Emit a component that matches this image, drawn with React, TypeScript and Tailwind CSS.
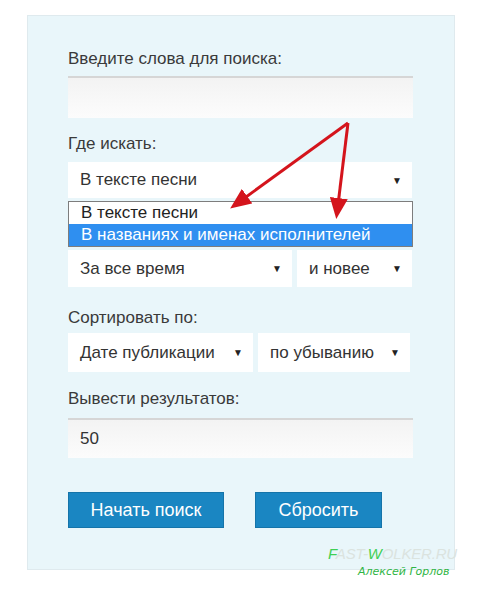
const sans = "font-['Liberation_Sans',Arial,sans-serif]"

function Select({ label, w, textX = 12 }: { label: string; w: string; textX?: number }) {
  return (
    <div className={`${w} h-full bg-white flex items-center justify-between pr-[10px]`}
      style={{ paddingLeft: textX }}>
      <span className="text-[17px] text-[#333]">{label}</span>
      <span className="text-[10px] text-[#222]">▼</span>
    </div>
  )
}

function Label({ children, mt }: { children: string; mt: string }) {
  return <div className={`${mt} h-5 leading-5 text-[17px] text-[#3a3a3a]`}>{children}</div>
}

export default function App() {
  return (
    <div className={`relative w-[480px] h-[600px] bg-white overflow-hidden pt-[15px] pl-[27px] ${sans}`}>
      <div className="w-[428px] h-[555px] bg-[#e9f6fa] border border-[#dfeaee] pt-[33px] pl-[40px]">
        <div className="w-[345px]">
          <Label mt="mt-0">Введите слова для поиска:</Label>
          <div className="mt-[7px] h-[42px] bg-gradient-to-b from-[#f3f3f3] to-[#fcfcfc] border-t-2 border-[#d6d6d6]" />

          <Label mt="mt-[16px]">Где искать:</Label>
          <div className="relative mt-[8px] h-[36px]">
            <Select label="В тексте песни" w="w-[344px]" />
            {/* открытый список */}
            <div className="absolute left-0 top-[39px] w-[345px] h-[46px] bg-white border border-[#7d7d7d] z-10">
              <div className="h-[22px] leading-[22px] pl-[12px] text-[17px] text-[#222]">В тексте песни</div>
              <div className="h-[22px] leading-[22px] pl-[12px] text-[17px] text-white bg-[#2f8ff0]">В названиях и именах исполнителей</div>
            </div>
          </div>

          <div className="mt-[52px] h-[37px] flex gap-[5px]">
            <Select label="За все время" w="w-[224px]" />
            <Select label="и новее" w="w-[115px]" />
          </div>

          <Label mt="mt-[21px]">Сортировать по:</Label>
          <div className="mt-[5px] h-[39px] flex gap-[5px]">
            <Select label="Дате публикации" w="w-[185px]" />
            <Select label="по убыванию" w="w-[152px]" />
          </div>

          <Label mt="mt-[17px]">Вывести результатов:</Label>
          <div className="mt-[9px] h-[40px] bg-gradient-to-b from-[#f3f3f3] to-[#fcfcfc] border-t-2 border-[#d6d6d6] flex items-center pl-[12px] text-[17px] text-[#333]">
            50
          </div>

          <div className="mt-[34px] flex gap-[31px]">
            <button className="w-[156px] h-[36px] bg-[#1a86c2] border border-[#1574a9] text-white text-[18px]">Начать поиск</button>
            <button className="w-[127px] h-[36px] bg-[#1a86c2] border border-[#1574a9] text-white text-[18px]">Сбросить</button>
          </div>
        </div>
      </div>

      {/* красные стрелки */}
      <svg className="absolute left-0 top-0 pointer-events-none z-20" width="480" height="600">
        <defs>
          <marker id="ah" markerWidth="7" markerHeight="6" refX="5" refY="3" orient="auto" markerUnits="strokeWidth">
            <path d="M0,0 L7,3 L0,6 Z" fill="#d4141c" />
          </marker>
        </defs>
        <line x1="348" y1="123" x2="235" y2="205" stroke="#d4141c" strokeWidth="3" markerEnd="url(#ah)" />
        <line x1="348" y1="123" x2="337" y2="213" stroke="#d4141c" strokeWidth="3" markerEnd="url(#ah)" />
      </svg>

      {/* водяной знак */}
      <div className="absolute left-[328px] top-[544px] z-20 italic whitespace-nowrap">
        <div className="text-[15px] leading-5 tracking-[-0.2px] text-[#dbe3df]">
          <span className="text-[#3fcf55]">F</span>AST-<span className="text-[#3fcf55]">W</span>OLKER.RU
        </div>
        <div className="ml-[30px] text-[11px] leading-4 text-[#2fb544] font-['DejaVu_Sans',sans-serif]">Алексей Горлов</div>
      </div>
    </div>
  )
}
